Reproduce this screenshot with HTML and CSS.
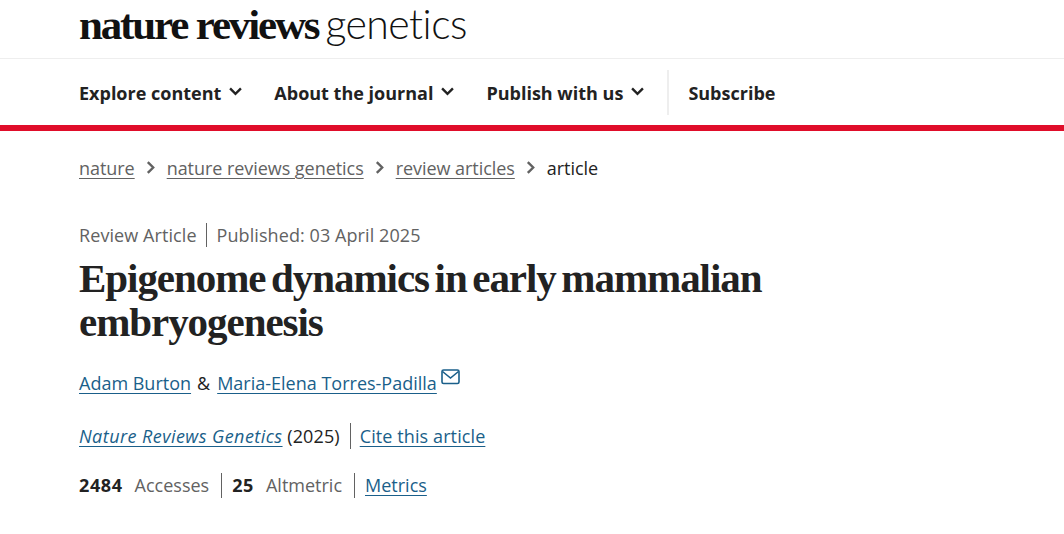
FILE: index.html
```html
<!DOCTYPE html>
<html lang="en">
<head>
<meta charset="utf-8">
<title>Epigenome dynamics in early mammalian embryogenesis</title>
<link rel="stylesheet" href="styles.css">
</head>
<body>
<header class="masthead">
  <div class="logo"><span class="logo-bold">nature reviews</span> <span class="logo-light">genetics</span></div>
</header>
<nav class="nav">
  <a class="nav-item">Explore content <svg class="chev" viewBox="0 0 12 8"><path d="M1 1.2l5 5 5-5" /></svg></a>
  <a class="nav-item">About the journal <svg class="chev" viewBox="0 0 12 8"><path d="M1 1.2l5 5 5-5" /></svg></a>
  <a class="nav-item">Publish with us <svg class="chev" viewBox="0 0 12 8"><path d="M1 1.2l5 5 5-5" /></svg></a>
  <a class="nav-item nav-sub">Subscribe</a>
</nav>
<main class="content">
  <ol class="crumbs">
    <li><a>nature</a></li>
    <li class="sep"><svg viewBox="0 0 8 12"><path d="M1.5 1l5 5-5 5" /></svg></li>
    <li><a>nature reviews genetics</a></li>
    <li class="sep"><svg viewBox="0 0 8 12"><path d="M1.5 1l5 5-5 5" /></svg></li>
    <li><a>review articles</a></li>
    <li class="sep"><svg viewBox="0 0 8 12"><path d="M1.5 1l5 5-5 5" /></svg></li>
    <li class="current">article</li>
  </ol>
  <ul class="meta">
    <li>Review Article</li>
    <li class="div">Published: 03 April 2025</li>
  </ul>
  <h1 class="title">Epigenome dynamics in early mammalian embryogenesis</h1>
  <p class="authors"><a>Adam Burton</a><span class="amp">&amp;</span><a>Maria-Elena Torres-Padilla</a><svg class="mail" viewBox="0 0 19 16"><rect x="1" y="1" width="17" height="13.5" rx="1.6" /><path d="M1.5 2.5l8 6.5 8-6.5" /></svg></p>
  <p class="cite"><span><a class="journal">Nature Reviews Genetics</a> (2025)</span><span class="div cite-link"><a>Cite this article</a></span></p>
  <ul class="metrics">
    <li><b>2484</b>Accesses</li>
    <li class="div"><b>25</b>Altmetric</li>
    <li class="div"><a>Metrics</a></li>
  </ul>
</main>
</body>
</html>
```
FILE: styles.css
```css
* { box-sizing: border-box; }
html, body { margin: 0; padding: 0; }
body {
  height: 534px;
  overflow: hidden;
  background: #fff;
  color: #222;
  font-family: "Open Sans", "Noto Sans", sans-serif;
  font-size: 18px;
}
a { color: #1a5f8a; text-decoration: underline; text-underline-offset: 3px; text-decoration-thickness: 1px; }
.masthead {
  height: 59px;
  padding-left: 79px;
  border-bottom: 1px solid #eee;
  overflow: hidden;
}
.logo {
  display: flex;
  align-items: baseline;
  gap: 7px;
  height: 58px;
  line-height: 47px;
  color: #111;
  white-space: nowrap;
}
.logo-bold {
  font-family: "Liberation Serif", serif;
  font-weight: 700;
  font-size: 43px;
  letter-spacing: -2.15px;
}
.logo-light {
  font-family: "Lato", sans-serif;
  font-weight: 300;
  font-size: 41px;
  letter-spacing: -0.55px;
}
.nav {
  display: flex;
  align-items: center;
  height: 72px;
  padding: 2px 0 0 79px;
  border-bottom: 6px solid #e00d2a;
  font-weight: 700;
}
.nav-item {
  display: flex;
  align-items: center;
  gap: 8px;
  margin-right: 32px;
  color: #222;
  font-size: 18px;
  white-space: nowrap;
  text-decoration: none;
}
.chev { width: 13px; height: 9px; margin-top: -3px; fill: none; stroke: #222; stroke-width: 2.2; }
.nav-sub {
  height: 45px;
  margin: -2px 0 0 -9px;
  padding: 2px 0 0 19px;
  border-left: 2px solid #eee;
}
.content { padding-left: 79px; }
.crumbs {
  display: flex;
  align-items: center;
  list-style: none;
  margin: 0;
  padding: 12px 0 0;
  height: 61px;
  color: #626262;
  letter-spacing: -0.05px;
}
.crumbs a { color: #626262; }
.crumbs .sep { display: flex; margin: 0 11.5px; }
.crumbs .sep svg { width: 9px; height: 13px; fill: none; stroke: #626262; stroke-width: 2.2; }
.crumbs .current { color: #222; }
.meta {
  display: flex;
  list-style: none;
  margin: 30px 0 0;
  padding: 1px 0 0;
  height: 25px;
  line-height: 25px;
  color: #626262;
  letter-spacing: 0.08px;
}
.div { border-left: 1px solid #626262; margin-left: 9px; padding-left: 10px; }
.title {
  width: 720px;
  margin: 9px 0 0;
  font-family: "Liberation Serif", serif;
  font-weight: 700;
  font-size: 41px;
  line-height: 44px;
  letter-spacing: -1.05px;
  word-spacing: -3.6px;
  color: #222;
}
.authors { margin: 22px 0 0; height: 34px; line-height: 34px; white-space: nowrap; }
.amp { margin: 0 7px 0 6px; color: #222; }
.mail { width: 19px; height: 16px; margin-left: 4px; vertical-align: 5px; fill: none; stroke: #1a5f8a; stroke-width: 1.6; }
.cite { display: flex; margin: 23px 0 0; height: 26px; line-height: 26px; letter-spacing: 0.1px; }
.cite .div { margin-left: 10px; padding-left: 9px; }
.journal { font-style: italic; letter-spacing: 0.45px; }
.metrics {
  display: flex;
  list-style: none;
  margin: 24px 0 0;
  padding: 0;
  height: 25px;
  line-height: 25px;
  color: #626262;
}
.metrics .div { margin-left: 12px; padding-left: 10px; }
.metrics b { color: #222; margin-right: 12px; letter-spacing: 0.6px; }
```
